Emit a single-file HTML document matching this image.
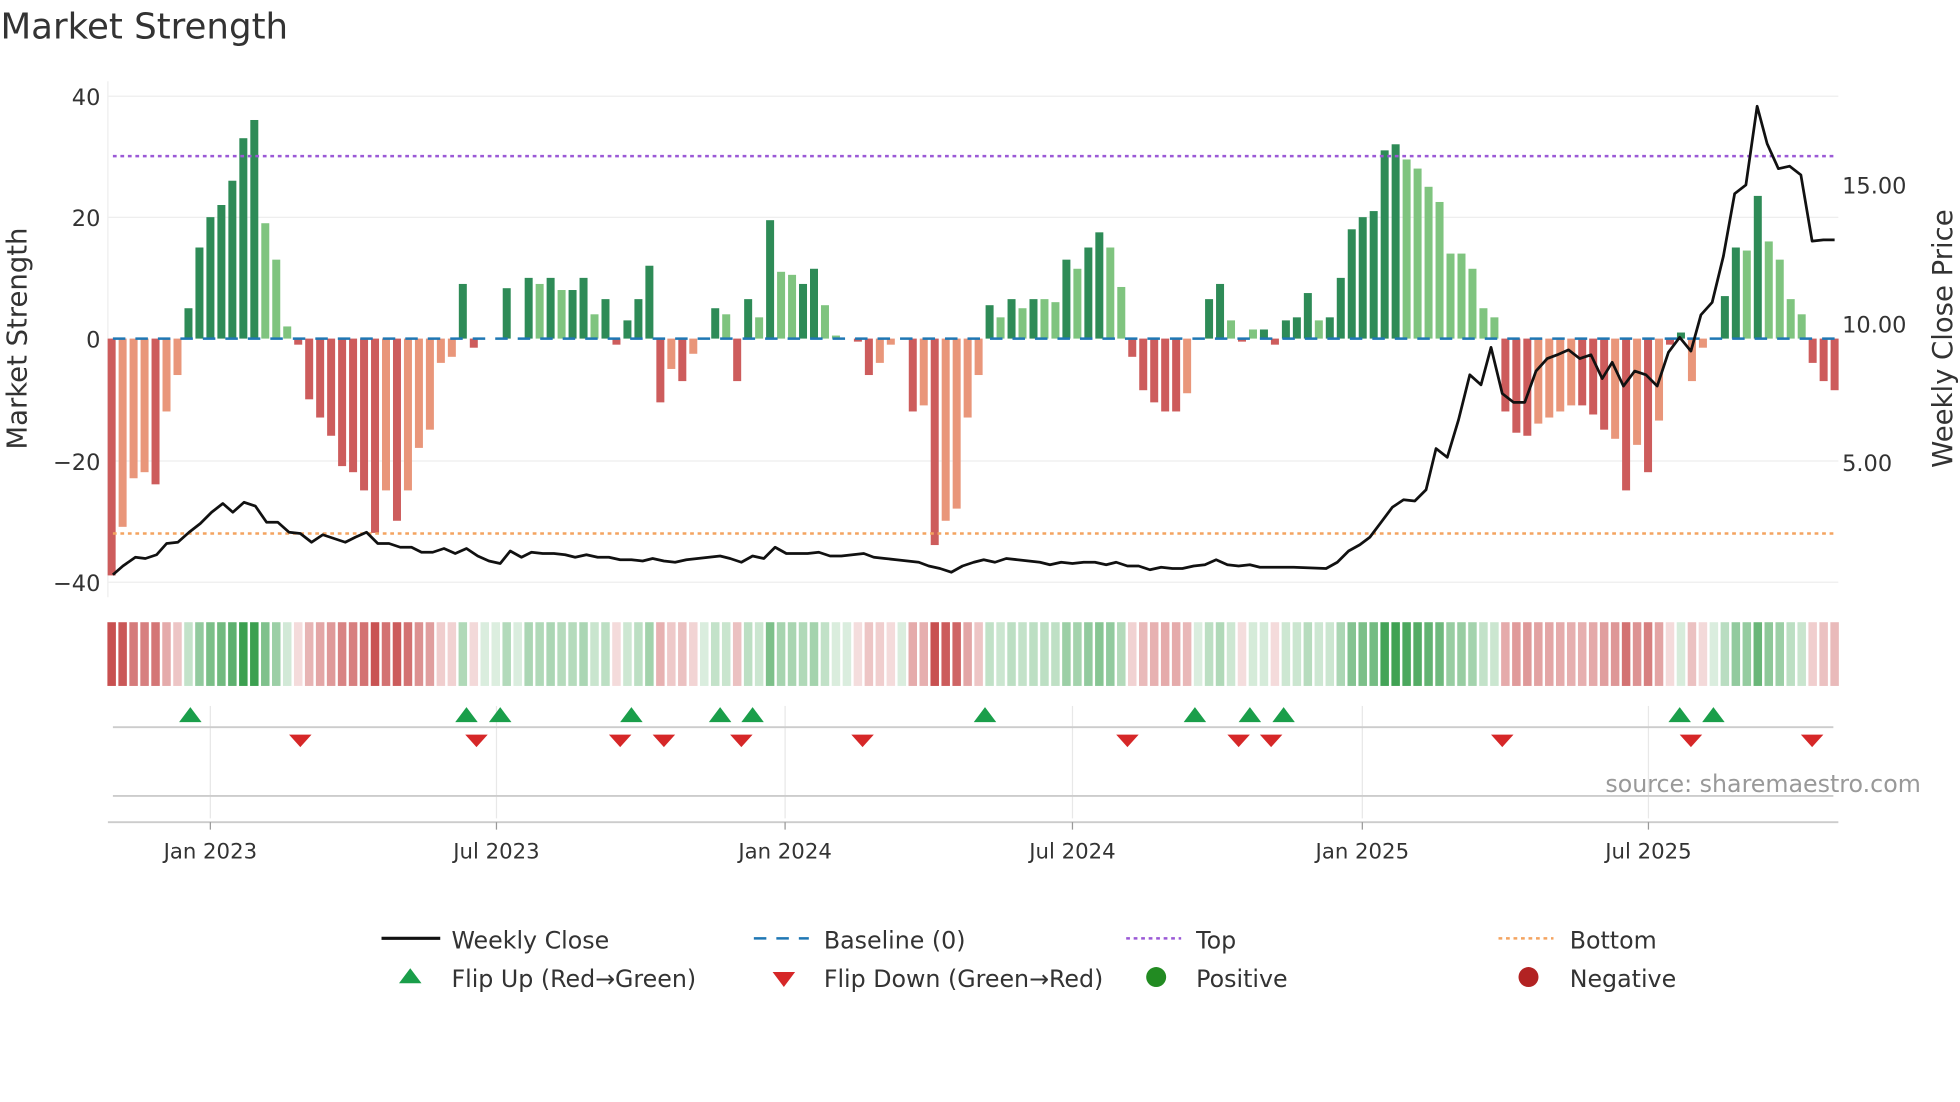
<!DOCTYPE html>
<html><head><meta charset="utf-8"><style>
html,body{margin:0;padding:0;background:#fff;width:1960px;height:1102px;overflow:hidden}
svg{display:block}
text{font-family:"DejaVu Sans","Liberation Sans",sans-serif;fill:#333}
</style></head><body>
<svg id="s" width="1960" height="1102" viewBox="0 0 1568 882" xmlns="http://www.w3.org/2000/svg">
<text x="0" y="31" font-size="28.5" fill="#333">Market Strength</text>
<g stroke="#eee" stroke-width="1">
<line x1="86" y1="77" x2="1471" y2="77"/><line x1="86" y1="174" x2="1471" y2="174"/>
<line x1="86" y1="369" x2="1471" y2="369"/><line x1="86" y1="466" x2="1471" y2="466"/>
<line x1="86" y1="65" x2="86" y2="478"/>
</g>
<g font-size="18" text-anchor="end">
<text x="80" y="84">40</text><text x="80" y="181">20</text><text x="80" y="278">0</text>
<text x="80" y="376">−20</text><text x="80" y="473">−40</text>
</g>
<g font-size="18">
<text x="1474" y="155">15.00</text><text x="1474" y="266">10.00</text><text x="1474" y="377">5.00</text>
</g>
<text transform="translate(21,271) rotate(-90)" font-size="22" text-anchor="middle">Market Strength</text>
<text transform="translate(1562,271) rotate(-90)" font-size="22" text-anchor="middle">Weekly Close Price</text>
<g id="bars"></g>
<line x1="90" y1="271" x2="1468" y2="271" stroke="#1f77b4" stroke-width="2" stroke-dasharray="10,8"/>
<line x1="90" y1="125" x2="1468" y2="125" stroke="#9b59d6" stroke-width="2" stroke-dasharray="3,3"/>
<line x1="90" y1="427" x2="1468" y2="427" stroke="#f4a460" stroke-width="2" stroke-dasharray="3,3"/>
<polyline id="price" fill="none" stroke="#111" stroke-width="2.2" stroke-linejoin="round"/>
<g id="strip"></g>
<g stroke="#e8e8e8" stroke-width="1">
<line x1="168" y1="565" x2="168" y2="655"/><line x1="397" y1="565" x2="397" y2="655"/>
<line x1="628" y1="565" x2="628" y2="655"/><line x1="858" y1="565" x2="858" y2="655"/>
<line x1="1090" y1="565" x2="1090" y2="655"/><line x1="1319" y1="565" x2="1319" y2="655"/>
</g>
<line x1="90" y1="582" x2="1467" y2="582" stroke="#ccc" stroke-width="1.5"/>
<line x1="90" y1="637" x2="1467" y2="637" stroke="#ccc" stroke-width="1.5"/>
<line x1="86" y1="658" x2="1471" y2="658" stroke="#ccc" stroke-width="1.5"/>
<g stroke="#999" stroke-width="1">
<line x1="168" y1="658" x2="168" y2="664"/><line x1="397" y1="658" x2="397" y2="664"/>
<line x1="628" y1="658" x2="628" y2="664"/><line x1="858" y1="658" x2="858" y2="664"/>
<line x1="1090" y1="658" x2="1090" y2="664"/><line x1="1319" y1="658" x2="1319" y2="664"/>
</g>
<g id="flips"></g>
<g font-size="17" text-anchor="middle">
<text x="168" y="687">Jan 2023</text><text x="397" y="687">Jul 2023</text><text x="628" y="687">Jan 2024</text>
<text x="858" y="687">Jul 2024</text><text x="1090" y="687">Jan 2025</text><text x="1319" y="687">Jul 2025</text>
</g>
<text x="1537" y="634" font-size="19" text-anchor="end" fill="#999" style="fill:#999">source: sharemaestro.com</text>
<g font-size="19">
<line x1="305" y1="751" x2="352" y2="751" stroke="#111" stroke-width="2.5"/><text x="361" y="759">Weekly Close</text>
<line x1="603" y1="751" x2="647" y2="751" stroke="#1f77b4" stroke-width="2" stroke-dasharray="10,8"/><text x="659" y="759">Baseline (0)</text>
<line x1="901" y1="751" x2="945" y2="751" stroke="#9b59d6" stroke-width="2" stroke-dasharray="3,3"/><text x="957" y="759">Top</text>
<line x1="1199" y1="751" x2="1243" y2="751" stroke="#f4a460" stroke-width="2" stroke-dasharray="3,3"/><text x="1256" y="759">Bottom</text>
<polygon points="319,787 337,787 328,775" fill="#1a9e4a"/><text x="361" y="790">Flip Up (Red→Green)</text>
<polygon points="618,778 636,778 627,790" fill="#d62728"/><text x="659" y="790">Flip Down (Green→Red)</text>
<circle cx="925" cy="782" r="8" fill="#228b22"/><text x="957" y="790">Positive</text>
<circle cx="1223" cy="782" r="8" fill="#b22222"/><text x="1256" y="790">Negative</text>
</g>
</svg>
<script>
var V=[-39,-31,-23,-22,-24,-12,-6,5,15,20,22,26,33,36,19,13,2,-1,-10,-13,-16,-21,-22,-25,-32,-25,-30,-25,-18,-15,-4,-3,9,-1.5,0.3,0,8.3,0.3,10,9,10,8,8,10,4,6.5,-1,3,6.5,12,-10.5,-5,-7,-2.5,0.3,5,4,-7,6.5,3.5,19.5,11,10.5,9,11.5,5.5,0.5,0.3,-0.5,-6,-4,-1,0.3,-12,-11,-34,-30,-28,-13,-6,5.5,3.5,6.5,5,6.5,6.5,6,13,11.5,15,17.5,15,8.5,-3,-8.5,-10.5,-12,-12,-9,0.3,6.5,9,3,-0.5,1.5,1.5,-1,3,3.5,7.5,3,3.5,10,18,20,21,31,32,29.5,28,25,22.5,14,14,11.5,5,3.5,-12,-15.5,-16,-14,-13,-12,-11,-11,-12.5,-15,-16.5,-25,-17.5,-22,-13.5,-1,1,-7,-1.5,0.3,7,15,14.5,23.5,16,13,6.5,4,-4,-7,-8.5];
var D=[1,0,0,0,1,0,0,1,1,1,1,1,1,1,0,0,0,1,1,1,1,1,1,1,1,0,1,0,0,0,0,0,1,1,1,1,1,0,1,0,1,0,1,1,0,1,1,1,1,1,1,0,1,0,0,1,0,1,1,0,1,0,0,1,1,0,0,0,1,1,0,0,0,1,0,1,0,0,0,0,1,0,1,0,1,0,0,1,0,1,1,0,0,1,1,1,1,1,0,0,1,1,0,1,0,1,1,1,1,1,0,1,1,1,1,1,1,1,0,0,0,0,0,0,0,0,0,1,1,1,0,0,0,0,1,1,1,0,1,0,1,0,1,1,0,0,1,1,0,1,0,0,0,0,1,1,1];
var N=V.length;
while(D.length<N)D.push(1);
D[N-1]=1;D[N-2]=1;D[N-3]=1;D[N-4]=0;D[N-5]=0;D[N-6]=0;D[N-7]=0;D[N-8]=1;D[N-9]=0;D[N-10]=1;D[N-11]=1;
var x0=89,dx=(1468-89)/(N-1),b='',s='';
for(var i=0;i<N;i++){var x=x0+i*dx,v=V[i],y0=271,h=Math.abs(v)*4.86,y=v>=0?y0-h:y0;
var c=v>=0?(D[i]?'#2e8b57':'#7fc47f'):(D[i]?'#cd5c5c':'#e9967a');
if(Math.abs(v)>0.4)b+='<rect x="'+(x-3.2)+'" y="'+y+'" width="6.4" height="'+h+'" fill="'+c+'"/>';
var a=Math.min(1,0.18+Math.abs(v)/40);
var sc=v>=0?'rgba(60,160,80,'+a+')':'rgba(200,80,80,'+a+')';
s+='<rect x="'+(x-3.4)+'" y="498" width="6.8" height="51" fill="'+sc+'"/>';}
document.getElementById('bars').innerHTML=b;document.getElementById('strip').innerHTML=s;
var P=[[90,460],[98,453],[108,446],[116,447],[125,444],[133,435],[142,434],[151,426],[160,419],[169,410],[178,403],[186,410],[195,402],[204,405],[213,418],[222,418],[231,426],[240,427],[249,434],[258,428],[267,431],[276,434],[284,430],[293,426],[302,435],[311,435],[320,438],[329,438],[337,442],[346,442],[355,439],[364,443],[373,439],[382,445],[391,449],[400,451],[408,441],[417,446],[425,442],[434,443],[443,443],[452,444],[460,446],[469,444],[478,446],[487,446],[496,448],[505,448],[514,449],[522,447],[531,449],[540,450],[549,448],[558,447],[567,446],[576,445],[584,447],[593,450],[602,445],[611,447],[620,438],[629,443],[638,443],[646,443],[655,442],[664,445],[673,445],[682,444],[691,443],[699,446],[708,447],[717,448],[726,449],[735,450],[743,453],[752,455],[761,458],[770,453],[779,450],[787,448],[796,450],[805,447],[814,448],[823,449],[832,450],[840,452],[849,450],[858,451],[867,450],[876,450],[885,452],[893,450],[902,453],[911,453],[920,456],[929,454],[938,455],[946,455],[955,453],[964,452],[973,448],[982,452],[991,453],[1000,452],[1008,454],[1017,454],[1035,454],[1061,455],[1070,450],[1079,441],[1088,436],[1096,430],[1105,418],[1114,406],[1123,400],[1132,401],[1141,392],[1149,359],[1158,366],[1167,336],[1176,300],[1185,308],[1193,278],[1202,315],[1211,322],[1220,322],[1229,297],[1238,287],[1246,284],[1255,280],[1264,287],[1273,284],[1282,303],[1290,290],[1299,309],[1308,297],[1317,300],[1326,309],[1335,282],[1344,270],[1353,281],[1361,252],[1370,242],[1379,205],[1388,155],[1397,148],[1406,85],[1414,115],[1423,135],[1432,133],[1441,140],[1450,193],[1459,192],[1468,192]];
document.getElementById('price').setAttribute('points',P.map(function(p){return p.join(',')}).join(' '));
var U=[152,373,400,505,576,602,788,956,1000,1027,1344,1371],Dn=[240,381,496,531,593,690,902,991,1017,1202,1353,1450],f='';
U.forEach(function(x){f+='<polygon points="'+(x-9)+',578 '+(x+9)+',578 '+x+',566" fill="#1a9e4a"/>';});
Dn.forEach(function(x){f+='<polygon points="'+(x-9)+',588 '+(x+9)+',588 '+x+',598" fill="#d62728"/>';});
document.getElementById('flips').innerHTML=f;
</script>
</body></html>
